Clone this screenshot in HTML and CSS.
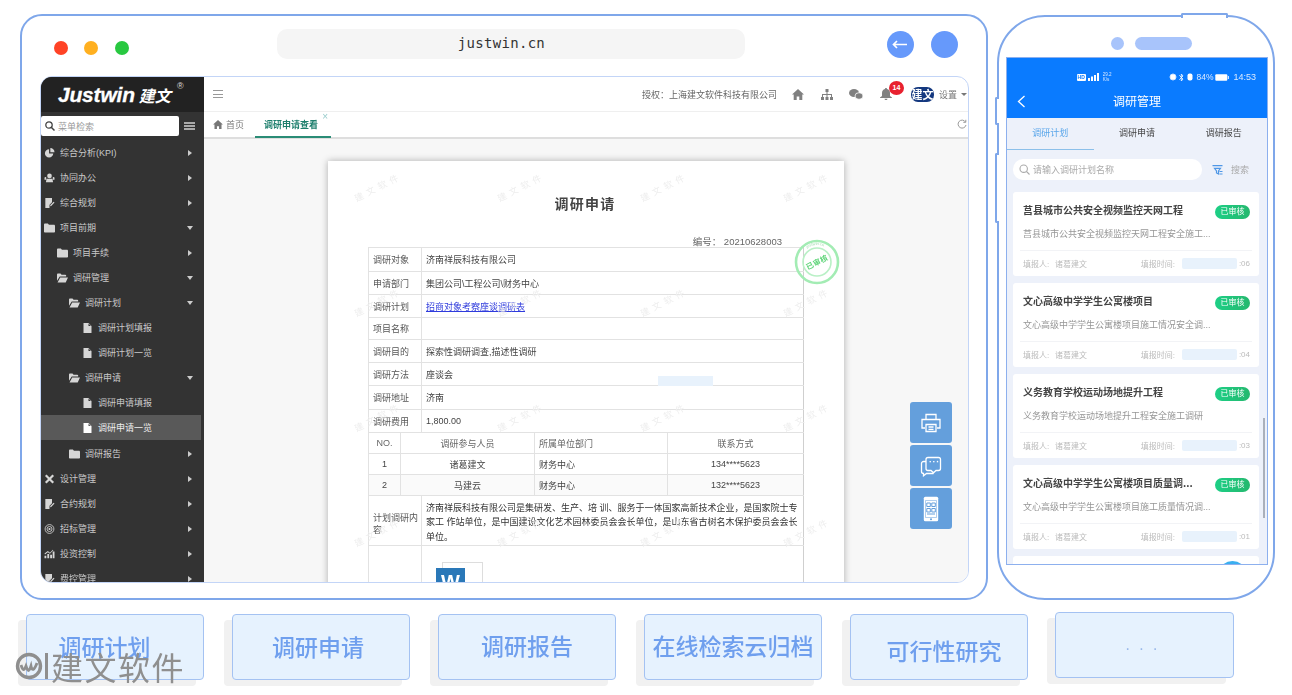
FILE: index.html
```html
<!DOCTYPE html>
<html lang="zh-CN">
<head>
<meta charset="utf-8">
<title>调研管理</title>
<link rel="stylesheet" href="styles.css">
</head>
<body>
<svg class="defs" width="0" height="0" aria-hidden="true">
  <symbol id="folder" viewBox="0 0 12 10"><path fill="currentColor" d="M0 1.2C0 .5.5 0 1.200 0h3l1.200 1.500h5.400c.7 0 1.200.5 1.200 1.200v6.100c0 .7-.5 1.200-1.200 1.200H1.200C.5 10 0 9.500 0 8.800z"/></symbol>
  <symbol id="open" viewBox="0 0 12 10"><path fill="currentColor" d="M0 1.200C0 .5.500 0 1.200 0h2.600l1.200 1.400h4c.6 0 1 .4 1 1v1H3L0 8zM3.500 4.400H12L9.500 10H.6z"/></symbol>
  <symbol id="file" viewBox="0 0 8 10"><path fill="currentColor" d="M0 0h5l3 3v7H0zM5 .6V3h2.400z" fill-rule="evenodd"/></symbol>
  <symbol id="pie" viewBox="0 0 12 12"><path fill="currentColor" d="M5.500 1.500a5 5 0 1 0 5 5h-5zM7 0v5h5a5 5 0 0 0-5-5z"/></symbol>
  <symbol id="team" viewBox="0 0 12 12"><circle cx="6" cy="3.500" r="2.800" fill="currentColor"/><path fill="currentColor" d="M2.500 7h7l.8 4H1.700zM0 5.500 2 4.500v3.500L0 8zM12 5.500 10 4.500v3.500l2 0z"/></symbol>
  <symbol id="note" viewBox="0 0 12 12"><path fill="currentColor" d="M1 0h8v5L6 8v4H1zM7 8.500 11 4.500l1 1L8 9.500 6.800 10z"/></symbol>
  <symbol id="tools" viewBox="0 0 12 12"><path fill="none" stroke="currentColor" stroke-width="2.600" d="M1.500 1.500 10.500 10.500M10.500 1.500 1.500 10.500"/></symbol>
  <symbol id="target" viewBox="0 0 12 12"><g fill="none" stroke="currentColor"><circle cx="6" cy="6" r="5.300"/><circle cx="6" cy="6" r="3"/></g><circle cx="6" cy="6" r="1.300" fill="currentColor"/></symbol>
  <symbol id="chart" viewBox="0 0 12 12"><path fill="currentColor" d="M0 8h2.200v3H0zM3.400 6h2.200v5H3.400zM6.800 7h2.200v4H6.800zM9.800 3H12v8H9.800zM0 5.500 4 2.500l2.500 2L10 .8l.6.6L6.500 5.800 4 4 .6 6.500z"/></symbol>
  <symbol id="home" viewBox="0 0 12 11"><path fill="currentColor" d="M6 0 12 5.500H10.300V11H7.300V7.500H4.700V11H1.700V5.500H0z"/></symbol>
  <symbol id="tree" viewBox="0 0 12 11"><path fill="currentColor" d="M4.500 0h3v3h-1v2H11v3h1v3H9V8h1V6H6.500v2h1v3h-3V8h1V6H2v2h1v3H0V8h1V5h4.500V3h-1z"/></symbol>
  <symbol id="chat" viewBox="0 0 14 11"><ellipse cx="5" cy="4" rx="5" ry="4" fill="currentColor"/><ellipse cx="10" cy="7" rx="4" ry="3.300" fill="currentColor" stroke="#fff" stroke-width=".8"/></symbol>
  <symbol id="bell" viewBox="0 0 12 12"><path fill="currentColor" d="M6 0c.6 0 1 .4 1 1 2 .5 3 2 3 4v3l2 1.500v.5H0v-.5L2 8V5c0-2 1-3.500 3-4 0-.6.4-1 1-1zM4.500 10.800h3C7.500 11.600 6.800 12 6 12s-1.500-.4-1.500-1.200z"/></symbol>
</svg>

<div class="page">
  <div class="stage">
    <section class="browser">
      <div class="bar">
        <span class="dot dot-red"></span>
        <span class="dot dot-amber"></span>
        <span class="dot dot-green"></span>
        <div class="url">justwin.cn</div>
        <div class="nav">
          <span class="nav-btn"><svg width="16" height="9" viewBox="0 0 16 9"><path d="M1 4.500h14M5 1 1.500 4.500 5 8" fill="none" stroke="#fff" stroke-width="1.700"/></svg></span>
          <span class="nav-btn"></span>
        </div>
      </div>
      <div class="app">
        <aside class="side">
          <div class="brand"><span class="brand-en">Justwin</span><span class="brand-cn">建文</span><span class="brand-r">®</span></div>
          <div class="side-search">
            <div class="search-box">
              <svg width="10" height="10" viewBox="0 0 10 10"><circle cx="4" cy="4" r="3.200" fill="none" stroke="#444" stroke-width="1.300"/><path d="M6.500 6.500 9.500 9.500" stroke="#444" stroke-width="1.500"/></svg>
              <span>菜单检索</span>
            </div>
            <span class="bars"></span>
          </div>
          <ul class="menu">
            <li class="m"><svg class="mi"><use href="#pie"/></svg>综合分析(KPI)<i class="car"></i></li>
            <li class="m"><svg class="mi"><use href="#team"/></svg>协同办公<i class="car"></i></li>
            <li class="m"><svg class="mi"><use href="#note"/></svg>综合规划<i class="car"></i></li>
            <li class="m"><svg class="mi"><use href="#folder"/></svg>项目前期<i class="car down"></i></li>
            <li class="m l2"><svg class="mi"><use href="#folder"/></svg>项目手续<i class="car"></i></li>
            <li class="m l2"><svg class="mi"><use href="#open"/></svg>调研管理<i class="car down"></i></li>
            <li class="m l3"><svg class="mi"><use href="#open"/></svg>调研计划<i class="car down"></i></li>
            <li class="m l4"><svg class="mi"><use href="#file"/></svg>调研计划填报</li>
            <li class="m l4"><svg class="mi"><use href="#file"/></svg>调研计划一览</li>
            <li class="m l3"><svg class="mi"><use href="#open"/></svg>调研申请<i class="car down"></i></li>
            <li class="m l4"><svg class="mi"><use href="#file"/></svg>调研申请填报</li>
            <li class="m l4 on"><svg class="mi"><use href="#file"/></svg>调研申请一览</li>
            <li class="m l3"><svg class="mi"><use href="#folder"/></svg>调研报告<i class="car"></i></li>
            <li class="m"><svg class="mi"><use href="#tools"/></svg>设计管理<i class="car"></i></li>
            <li class="m"><svg class="mi"><use href="#note"/></svg>合约规划<i class="car"></i></li>
            <li class="m"><svg class="mi"><use href="#target"/></svg>招标管理<i class="car"></i></li>
            <li class="m"><svg class="mi"><use href="#chart"/></svg>投资控制<i class="car"></i></li>
            <li class="m"><svg class="mi"><use href="#note"/></svg>费控管理<i class="car"></i></li>
          </ul>
        </aside>
        <main class="main">
          <div class="top">
            <span class="ham"></span>
            <span class="auth">授权：上海建文软件科技有限公司</span>
            <span class="tool"><svg width="12" height="11"><use href="#home"/></svg></span>
            <span class="tool"><svg width="12" height="11"><use href="#tree"/></svg></span>
            <span class="tool"><svg width="14" height="11"><use href="#chat"/></svg></span>
            <span class="tool bell"><svg width="12" height="12"><use href="#bell"/></svg><b class="badge">14</b></span>
            <span class="jw">建文</span>
            <span class="set">设置</span>
            <i class="set-car"></i>
          </div>
          <div class="tabs">
            <span class="tab"><svg width="10" height="9"><use href="#home"/></svg>首页</span>
            <span class="tab tab-on">调研申请查看<em class="close">×</em></span>
            <svg class="reload" width="10" height="10" viewBox="0 0 10 10"><path d="M8.500 3A4 4 0 1 0 9 6M8.800 .8V3.300H6.300" fill="none" stroke="#999"/></svg>
          </div>
          <div class="content">
            <article class="paper">
              <div class="wm-layer" aria-hidden="true">
                <span>建文软件</span><span>建文软件</span><span>建文软件</span><span>建文软件</span>
                <span>建文软件</span><span>建文软件</span><span>建文软件</span><span>建文软件</span>
                <span>建文软件</span><span>建文软件</span><span>建文软件</span><span>建文软件</span>
                <span>建文软件</span><span>建文软件</span><span>建文软件</span><span>建文软件</span>
              </div>
              <h1 class="doc-title">调研申请</h1>
              <div class="doc-no">编号： 20210628003</div>
              <table class="doc">
                <colgroup><col class="c1"><col class="c2"><col class="c3"><col class="c4"><col class="c5"></colgroup>
                <tr class="r24"><th colspan="2">调研对象</th><td colspan="3">济南祥辰科技有限公司</td></tr>
                <tr class="r23"><th colspan="2">申请部门</th><td colspan="3">集团公司\工程公司\财务中心</td></tr>
                <tr class="r23"><th colspan="2">调研计划</th><td colspan="3"><a class="link">招商对象考察座谈调研表</a></td></tr>
                <tr class="r22"><th colspan="2">项目名称</th><td colspan="3"></td></tr>
                <tr class="r23"><th colspan="2">调研目的</th><td colspan="3">探索性调研调查,描述性调研</td></tr>
                <tr class="r23"><th colspan="2">调研方法</th><td colspan="3">座谈会</td></tr>
                <tr class="r24"><th colspan="2">调研地址</th><td colspan="3">济南</td></tr>
                <tr class="r23"><th colspan="2">调研费用</th><td colspan="3">1,800.00</td></tr>
                <tr class="r21 head"><td class="ctr">NO.</td><td class="ctr" colspan="2">调研参与人员</td><td>所属单位部门</td><td class="ctr">联系方式</td></tr>
                <tr class="r21"><td class="ctr">1</td><td class="ctr" colspan="2">诸葛建文</td><td>财务中心</td><td class="ctr">134****5623</td></tr>
                <tr class="r21 alt"><td class="ctr">2</td><td class="ctr" colspan="2">马建云</td><td>财务中心</td><td class="ctr">132****5623</td></tr>
                <tr class="r50"><th colspan="2" class="wrap">计划调研内容</th><td colspan="3" class="para">济南祥辰科技有限公司是集研发、生产、培 训、服务于一体国家高新技术企业，是国家院士专<br>家工 作站单位，是中国建设文化艺术园林委员会会长单位，是山东省古树名木保护委员会会长<br>单位。</td></tr>
                <tr class="r80"><th colspan="2"></th><td colspan="3" class="att"><span class="word"><b>W</b></span></td></tr>
              </table>
              <span class="mask"></span>
              <svg class="stamp" width="50" height="50" viewBox="0 0 50 50">
                <defs><path id="arc" d="M8 25a17 17 0 0 1 34 0"/></defs>
                <circle cx="25" cy="25" r="21" fill="none" stroke="#a3ecb4" stroke-width="2.600"/>
                <circle cx="25" cy="25" r="14" fill="none" stroke="#b9f0c6" stroke-width="1.600"/>
                <text class="stamp-arc"><textPath href="#arc" startOffset="16">justwin.cn</textPath></text>
                <text x="25" y="28" text-anchor="middle" transform="rotate(-27 25 25)" class="stamp-t">已审核</text>
              </svg>
            </article>
            <div class="floats">
              <span class="fb"><svg width="22" height="22" viewBox="0 0 22 22" fill="none" stroke="#fff" stroke-width="1.300"><path d="M6 7V2.500h10V7M5 16H2V7.500h18V16h-3"/><path d="M6 12.500h10v7H6zM8.500 15h5M8.500 17.300h5"/></svg></span>
              <span class="fb"><svg width="22" height="22" viewBox="0 0 22 22" fill="none" stroke="#fff" stroke-width="1.300"><path d="M8 2.500h10.500a2 2 0 0 1 2 2v9a2 2 0 0 1-2 2H16l-2.500 2.300-2.500-2.300H8a2 2 0 0 1-2-2v-9a2 2 0 0 1 2-2z"/><path d="M6 6.500H3.500a2 2 0 0 0-2 2v8a2 2 0 0 0 2 2v2.300l3-2.300h7"/></svg><i class="dots">···</i></span>
              <span class="fb"><svg width="16" height="26" viewBox="0 0 16 26"><rect x=".8" y=".8" width="14.400" height="24.400" rx="1.500" fill="#fff"/><g fill="none" stroke="#649fdc"><path d="M2.500 4.500h11v17h-11z" stroke-width=".5"/><path d="M3.800 7h3.500v3.500H3.800zM8.800 7h3.500v3.500H8.800zM3.800 12.500h3.500V16H3.800zM8.800 12.500h3.500V16H8.800zM4 18h8"/></g><circle cx="8" cy="23.300" r="1" fill="#649fdc"/></svg></span>
            </div>
          </div>
        </main>
      </div>
    </section>

    <section class="phone">
      <span class="bump bump-top"></span>
      <span class="bump bump-l1"></span>
      <span class="bump bump-l2"></span>
      <div class="notch"><span class="cam"></span><span class="spk"></span></div>
      <div class="screen">
        <header class="ph-head">
          <div class="status">
            <span class="hd">HD</span>
            <svg width="12" height="8" viewBox="0 0 12 8"><path fill="#fff" d="M0 5h2v3H0zM3 3.500h2V8H3zM6 2h2v6H6zM9 0h2v8H9z"/></svg>
            <span class="speed">29.2<br>K/s</span>
            <span class="gap"></span>
            <svg width="8" height="8" viewBox="0 0 8 8"><circle cx="4" cy="4" r="3" fill="#fff" stroke="#cfe3ff"/></svg>
            <svg width="5" height="9" viewBox="0 0 5 9"><path d="M.3 2.300 4 6 2.300 8V1L4 3 .3 6.700" fill="none" stroke="#fff" stroke-width=".8"/></svg>
            <svg width="8" height="8" viewBox="0 0 8 8"><rect x="1.500" y=".5" width="5" height="7" rx="2" fill="#fff"/></svg>
            <span>84%</span>
            <svg width="14" height="7" viewBox="0 0 14 7"><rect x=".3" y=".3" width="12" height="6.400" rx="1" fill="#fff"/><rect x="12.800" y="2" width="1" height="3" fill="#fff"/></svg>
            <span class="clock">14:53</span>
          </div>
          <div class="ph-title">
            <svg class="back" width="9" height="13" viewBox="0 0 9 13"><path d="M7.500 1 1.500 6.500l6 5.500" fill="none" stroke="#fff" stroke-width="1.300"/></svg>
            <span>调研管理</span>
          </div>
        </header>
        <nav class="ph-tabs">
          <span class="ph-tab active">调研计划</span>
          <span class="ph-tab">调研申请</span>
          <span class="ph-tab">调研报告</span>
        </nav>
        <div class="ph-search">
          <div class="pill">
            <svg width="11" height="11" viewBox="0 0 11 11"><circle cx="4.700" cy="4.700" r="3.700" fill="none" stroke="#aaa" stroke-width="1.100"/><path d="M7.500 7.500 10.500 10.500" stroke="#aaa" stroke-width="1.100"/></svg>
            <span>请输入调研计划名称</span>
          </div>
          <svg class="filter" width="11" height="10" viewBox="0 0 11 10"><path d="M.5.700h10M2.500 3.300h6L6.500 6v3L4.500 8V6zM7.500 6.500h3M7.500 9h3" fill="none" stroke="#4f97e6" stroke-width="1.200"/></svg>
          <span class="ph-go">搜索</span>
        </div>
        <div class="cards">
          <article class="card">
            <div class="card-head"><h2>莒县城市公共安全视频监控天网工程</h2><span class="ok">已审核</span></div>
            <p class="desc">莒县城市公共安全视频监控天网工程安全施工...</p>
            <div class="foot"><span class="who">填报人: </span><span>诸葛建文</span><span class="when">填报时间:</span><span class="blank"></span><span>:06</span></div>
          </article>
          <article class="card">
            <div class="card-head"><h2>文心高级中学学生公寓楼项目</h2><span class="ok">已审核</span></div>
            <p class="desc">文心高级中学学生公寓楼项目施工情况安全调...</p>
            <div class="foot"><span class="who">填报人: </span><span>诸葛建文</span><span class="when">填报时间:</span><span class="blank"></span><span>:04</span></div>
          </article>
          <article class="card">
            <div class="card-head"><h2>义务教育学校运动场地提升工程</h2><span class="ok">已审核</span></div>
            <p class="desc">义务教育学校运动场地提升工程安全施工调研</p>
            <div class="foot"><span class="who">填报人: </span><span>诸葛建文</span><span class="when">填报时间:</span><span class="blank"></span><span>:03</span></div>
          </article>
          <article class="card">
            <div class="card-head"><h2>文心高级中学学生公寓楼项目质量调...</h2><span class="ok">已审核</span></div>
            <p class="desc">文心高级中学学生公寓楼项目施工质量情况调...</p>
            <div class="foot"><span class="who">填报人: </span><span>诸葛建文</span><span class="when">填报时间:</span><span class="blank"></span><span>:01</span></div>
          </article>
          <article class="card"></article>
        </div>
        <span class="sb"></span>
        <span class="bubble"></span>
      </div>
    </section>
  </div>

  <div class="chips">
    <span class="chip chip-a">调研计划</span>
    <span class="chip chip-b">调研申请</span>
    <span class="chip chip-up">调研报告</span>
    <span class="chip chip-up">在线检索云归档</span>
    <span class="chip chip-down">可行性研究</span>
    <span class="chip chip-more">· · ·</span>
  </div>

  <div class="mark">
    <svg width="28" height="28" viewBox="0 0 28 28"><circle cx="14" cy="14" r="11.500" fill="none" stroke="#8f8f8f" stroke-width="3.400"/><path d="M6 13c2 6 3 6 5 1 2 6 3 6 5 0 1 5 3 5 6-3" fill="none" stroke="#8f8f8f" stroke-width="2.800"/></svg>
    <span class="mark-bar"></span>
    <span class="mark-t">建文软件</span>
  </div>
</div>
</body>
</html>
```

FILE: styles.css
```css
* { box-sizing: border-box; }
html, body { margin: 0; padding: 0; background: #fff; }
body {
  width: 1292px;
  height: 695px;
  overflow: hidden;
  font-family: "Liberation Sans", "Noto Sans CJK SC", sans-serif;
  color: #555;
}
.defs { position: absolute; }
ul, h1, h2, p { margin: 0; padding: 0; }

.page { position: relative; width: 1292px; height: 695px; padding: 14px 0 0 20px; filter: blur(.4px); }
.stage { display: flex; gap: 9px; align-items: flex-start; }

/* browser frame */
.browser {
  width: 968px;
  height: 586px;
  border: 2px solid #7fa7ea;
  border-radius: 22px;
  background: #fff;
  padding: 0 18px;
}
.bar { display: flex; align-items: flex-start; height: 60px; padding: 13px 10px 0 14px; }
.dot { width: 14px; height: 14px; border-radius: 50%; margin: 12px 16.500px 0 0; }
.dot-red { background: #ff4326; }
.dot-amber { background: #ffb020; }
.dot-green { background: #28c840; }
.url {
  width: 469px;
  height: 30px;
  margin-left: 131.500px;
  padding-right: 19px;
  border-radius: 10px;
  background: #f5f5f5;
  text-align: center;
  font: 14px/28px "DejaVu Sans Mono", monospace;
  letter-spacing: .3px;
  color: #333;
}
.nav { display: flex; gap: 17px; margin: 2px 0 0 142px; }
.nav-btn {
  width: 27px; height: 27px; border-radius: 50%; background: #6699fb;
  display: flex; align-items: center; justify-content: center;
}

/* application */
.app {
  display: flex;
  width: 929px;
  height: 507px;
  border: 1px solid #c3d5f7;
  border-radius: 12px;
  overflow: hidden;
  background: #fff;
  filter: blur(.35px);
}
.side { width: 163px; flex: none; background: #333; color: #c9c9c9; font-size: 9px; overflow: hidden; }
.brand { height: 35px; background: #222; color: #fff; display: flex; align-items: center; padding-left: 17px; position: relative; }
.brand-en { font: italic 700 21px/1 "Liberation Sans", sans-serif; letter-spacing: -.2px; -webkit-text-stroke: .3px #fff; }
.brand-cn { font: italic 700 16px/1 "Noto Sans CJK SC", sans-serif; margin-left: 4px; }
.brand-r { position: absolute; left: 136px; top: 4px; font-size: 9px; color: #ddd; }
.side-search { height: 28px; display: flex; align-items: center; }
.search-box {
  width: 138px; height: 20px; background: #fff; border-radius: 2px;
  display: flex; align-items: center; gap: 3px; padding-left: 4px; color: #999;
}
.bars { width: 11px; height: 8px; margin-left: 5px; border-top: 2px solid #aaa; border-bottom: 2px solid #aaa; background: linear-gradient(#aaa, #aaa) center / 100% 2px no-repeat; }
.menu { list-style: none; }
.m { display: flex; align-items: center; height: 25px; padding-left: 3px; padding-right: 9px; white-space: nowrap; width: 160px; }
.on + .m { margin-top: 1px; }
.mi { width: 11px; height: 10px; margin-right: 5px; color: #d6d6d6; flex: none; }
.l2 { padding-left: 16px; }
.l3 { padding-left: 28px; }
.l4 { padding-left: 41px; }
.on { background: #595959; color: #eee; }
.on .mi { color: #fff; }
.car { margin-left: auto; width: 0; height: 0; border-style: solid; border-width: 3.500px 0 3.500px 4px; border-color: transparent transparent transparent #ccc; }
.car.down { border-width: 4px 3.500px 0; border-color: #ccc transparent transparent; margin-right: -1px; }

.main { flex: 1; display: flex; flex-direction: column; min-width: 0; }
.top { height: 35px; flex: none; display: flex; align-items: center; padding-left: 9px; border-bottom: 1px solid #efefef; color: #777; font-size: 9px; }
.ham { width: 10px; height: 8px; border-top: 1px solid #999; border-bottom: 1px solid #999; background: linear-gradient(#999, #999) center / 100% 1px no-repeat; }
.auth { margin: 0 7px 0 auto; color: #666; }
.tool { width: 29px; display: flex; justify-content: center; position: relative; color: #808080; }
.bell { left: 1px; }
.badge {
  position: absolute; left: 17px; top: -7px; width: 15px; height: 14px; border-radius: 50%;
  background: #e8212f; color: #fff; font: 700 7px/14px "Liberation Sans", sans-serif; text-align: center;
}
.jw {
  margin-left: 11px; width: 23px; height: 15px; border-radius: 7px; background: #14387f;
  color: #fff; font: 700 11px/15px "Noto Sans CJK SC", sans-serif; text-align: center; white-space: nowrap; overflow: hidden;
}
.set { margin-left: 5px; color: #777; }
.set-car { margin: 0 1px 0 4px; border-style: solid; border-width: 3px 3px 0; border-color: #777 transparent transparent; }

.tabs { height: 27px; flex: none; display: flex; align-items: stretch; padding-left: 9px; position: relative; border-bottom: 2px solid #dedede; font-size: 9px; color: #777; }
.tab { display: flex; align-items: center; gap: 3px; width: 42px; }
.tab-on { width: 76px; padding-left: 9px; color: #1e7f6d; font-weight: 700; border-bottom: 2px solid #2a8c76; margin-bottom: -1px; position: relative; }
.close { position: absolute; right: 3px; top: -1px; font: normal 10px/12px "Liberation Sans", sans-serif; color: #9cc; }
.reload { margin: 7px 1px 0 auto; }

.content { flex: 1; background: #f7f7f7; padding: 22px 0 0 124px; position: relative; overflow: hidden; }
.paper { width: 516px; height: 500px; background: #fff; box-shadow: 0 0 7px rgba(0,0,0,.3); padding: 32px 41px 0 40px; position: relative; }
.doc-title { font: 700 14px/20px "Noto Sans CJK SC", sans-serif; letter-spacing: 1.200px; color: #444; text-align: center; margin-right: 1px; }
.doc-no { margin-top: 23px; height: 12px; font-size: 9.500px; line-height: 12px; color: #666; text-align: right; padding-right: 21px; }
.doc { width: 435px; margin-top: -1px; table-layout: fixed; border-collapse: collapse; font-size: 9px; color: #555; }
.c1 { width: 32px; } .c2 { width: 21px; } .c3 { width: 113px; } .c4 { width: 133px; } .c5 { width: 136px; }
.doc th, .doc td { border: 1px solid #e2e2e2; padding: 0 4px; font-weight: 400; text-align: left; white-space: nowrap; overflow: hidden; }
.doc td { color: #444; }
.doc tr > *:last-child { border-right-color: #cfcfcf; }
.doc .ctr { text-align: center; }
.r24 { height: 24px; } .r23 { height: 23px; } .r22 { height: 22px; } .r21 { height: 21px; } .r50 { height: 50px; } .r80 { height: 80px; }
.head td { color: #666; }
.alt td { background: #fafafa; }
.doc .wrap { white-space: normal; line-height: 12px; padding: 6px 2px 0 4px; }
.doc .para { line-height: 14.500px; color: #333; padding-top: 4px; }
.link { color: #2f3bdc; text-decoration: underline; }
.doc .att { vertical-align: top; padding-top: 0; }
.word { display: block; position: relative; width: 46px; height: 48px; margin: 16px 0 0 9px; }
.word::before { content: ""; position: absolute; left: 7px; top: 0; width: 39px; height: 48px; border: 1px solid #ddd; background: #fff; }
.word b { position: absolute; left: 1px; top: 6px; width: 29px; height: 28px; background: #2a78b8; color: #fff; font: 700 20px/28px "Liberation Sans", sans-serif; text-align: center; }

.mask { position: absolute; left: 330px; top: 215px; width: 55px; height: 10px; background: #e8f2fc; }
.stamp { position: absolute; left: 464px; top: 76px; filter: blur(.5px); }
.stamp-t { font: 700 7.500px "Noto Sans CJK SC", sans-serif; fill: #5fd579; letter-spacing: .4px; }
.stamp-arc { font: 4px "Liberation Sans", sans-serif; fill: #9fdcae; }

.wm-layer {
  position: absolute; left: 24px; top: 10px; width: 572px; height: 460px;
  display: grid; grid-template-columns: repeat(4, 143px); grid-template-rows: repeat(4, 115px);
  pointer-events: none; z-index: 1;
}
.wm-layer span { transform: rotate(-27deg); transform-origin: left top; margin-top: 22px; font-size: 9px; letter-spacing: 4px; color: #eee; white-space: nowrap; font-family: "Noto Sans CJK SC", sans-serif; }

.floats { position: absolute; left: 706px; top: 263px; display: flex; flex-direction: column; gap: 2px; }
.fb { width: 42px; height: 41px; background: #649fdc; border-radius: 3px; display: flex; align-items: center; justify-content: center; position: relative; }
.dots { position: absolute; left: 19px; top: 12px; font: 700 9px/10px "Liberation Sans", sans-serif; color: #fff; letter-spacing: .6px; }

/* phone */
.phone {
  position: relative;
  width: 278px;
  height: 585px;
  margin-top: 1px;
  border: 2px solid #7fa7ea;
  border-radius: 48px;
  background: #fff;
}
.bump { position: absolute; border: 2px solid #7fa7ea; background: #fff; }
.bump-top { left: 182px; top: -4px; width: 47px; height: 5px; border-bottom: 0; border-radius: 2px 2px 0 0; }
.bump-l1 { left: -4px; top: 80px; width: 4px; height: 28px; border-right: 0; border-radius: 2px 0 0 2px; }
.bump-l2 { left: -4px; top: 136px; width: 4px; height: 70px; border-right: 0; border-radius: 2px 0 0 2px; }
.notch { height: 40px; padding: 20px 0 0 112px; display: flex; align-items: flex-start; gap: 11px; }
.cam { width: 13px; height: 13px; border-radius: 50%; background: #a8c4fb; }
.spk { width: 57px; height: 13px; border-radius: 7px; background: #a8c4fb; }
.screen {
  position: relative;
  width: 262px;
  height: 508px;
  margin-left: 7px;
  border: 1px solid #8db0ee;
  background: #edf1fa;
  overflow: hidden;
  filter: blur(.3px);
}
.ph-head { height: 60px; padding-top: 12px; background: #0a7bff; color: #fff; }
.status { height: 14px; display: flex; align-items: center; justify-content: flex-end; gap: 2px; padding-right: 11px; font-size: 8.500px; color: #dceaff; }
.hd { font: 700 5px/7px "Liberation Sans", sans-serif; background: #fff; color: #0a7bff; border-radius: 1px; width: 9px; text-align: center; }
.speed { font-size: 4.500px; line-height: 5px; margin-left: 1px; }
.gap { width: 54px; }
.clock { margin-left: 2px; font-size: 9px; }
.ph-title { height: 34px; position: relative; text-align: center; font: 12px/34px "Noto Sans CJK SC", sans-serif; }
.back { position: absolute; left: 10px; top: 11px; }
.ph-tabs { height: 31px; display: grid; grid-template-columns: repeat(3, 1fr); background: #edf1fa; font-size: 9px; color: #444; text-align: center; line-height: 31px; }
.ph-tab { border-bottom: 1px solid transparent; }
.ph-tab.active { color: #5aa6ea; border-bottom-color: #8cc0ea; }
.ph-search { display: flex; align-items: center; margin: 10px 0 0 6px; height: 21px; }
.pill { width: 189px; height: 21px; border-radius: 10px; background: #fff; display: flex; align-items: center; gap: 3px; padding-left: 6px; font-size: 9px; color: #aaa; }
.filter { margin-left: 10px; }
.ph-go { margin-left: 8px; font-size: 9px; color: #aaa; }
.cards { margin: 12px 0 0 6px; display: flex; flex-direction: column; gap: 7px; }
.card { width: 246px; height: 84px; flex: none; background: #fff; border-radius: 3px; padding: 0 7px; }
.card-head { height: 36px; display: flex; align-items: center; justify-content: space-between; padding: 0 2px 0 3px; }
.card-head h2 { font: 700 10px/14px "Noto Sans CJK SC", sans-serif; color: #444; white-space: nowrap; }
.ok { width: 35px; height: 14px; border-radius: 7px; background: linear-gradient(90deg, #1dcf86, #25b86e); color: #fff; font-size: 8px; line-height: 14px; text-align: center; margin-top: 3px; }
.desc { height: 12px; padding-left: 3px; font-size: 9px; line-height: 12px; color: #969696; white-space: nowrap; margin-bottom: 10px; }
.foot { height: 26px; border-top: 1px solid #f2f3f6; display: flex; align-items: center; padding-left: 3px; font-size: 8px; color: #bbb; white-space: nowrap; }
.who { width: 32px; }
.when { margin-left: auto; margin-right: 7px; }
.blank { width: 55px; height: 11px; border-radius: 2px; background: #e8f2fc; margin-right: 2px; }
.foot > span:last-child { margin-right: 2px; }
.sb { position: absolute; right: 2px; top: 360px; width: 2px; height: 100px; background: #aab0bb; }
.bubble { position: absolute; left: 211px; top: 503px; width: 29px; height: 29px; border-radius: 50%; background: #3aaff0; }

/* bottom chips */
.chips { display: flex; gap: 28px; margin: 14px 0 0 6px; }
.chip {
  width: 178px; height: 66px; flex: none;
  border: 1px solid #a4c2f2; border-radius: 4px; background: #e6f2fe;
  box-shadow: -8px 6px 0 #f1f1f1;
  color: #6f9fee;
  font: 500 23px/62px "Noto Sans CJK SC", sans-serif;
  text-align: center;
  white-space: nowrap;
}
.chip-a { padding-right: 21px; }
.chip-b { padding-right: 6px; }
.chip-up { line-height: 60px; }
.chip-down { line-height: 70px; padding-left: 10px; }
.chip-more { margin: -2px 0 0 -1px; padding-right: 4px; font: 16px/72px "Liberation Sans", sans-serif; letter-spacing: 2px; color: #9ab8ea; width: 179px; }

/* corner watermark */
.mark { position: absolute; left: 15px; top: 650px; display: flex; align-items: center; color: #8f8f8f; }
.mark-bar { width: 3px; height: 26px; margin-left: 2px; background: #8f8f8f; }
.mark-t { margin-left: 3px; font: 32px/32px "Noto Sans CJK SC", sans-serif; letter-spacing: 1.500px; }
```
